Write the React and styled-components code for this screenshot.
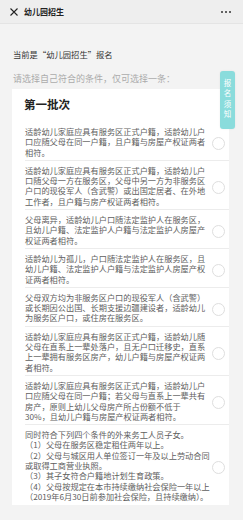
import React from 'react';
import styled, { createGlobalStyle } from 'styled-components';

const Global = createGlobalStyle`
  html, body {
    margin: 0;
    padding: 0;
    background: #f3f3f3;
  }
  body {
    font-family: "Noto Sans CJK SC", "Noto Sans", sans-serif;
  }
`

const Page = styled.div`
  position: relative;
  width: 243px;
  height: 520px;
  overflow: hidden;
  background: #f3f3f3;
`

const TopBar = styled.div`
  height: 24px;
  display: flex;
  align-items: center;
  padding: 0 10px;
  background: #eeeeee;
  border-bottom: 1px solid #e4e4e4;
  box-sizing: border-box;
`

const Title = styled.div`
  flex: 1;
  margin-left: 6px;
  font-size: 8px;
  font-weight: 700;
  color: #222;
  line-height: 10px;
`

const Dots = styled.div`
  display: flex;
  gap: 2px;
  margin-right: 2px;
`

const Dot = styled.span`
  width: 2px;
  height: 2px;
  border-radius: 50%;
  background: #333;
`

const Intro = styled.div`
  padding: 24px 14px 0 13px;
`

const Current = styled.div`
  font-size: 8.3px;
  line-height: 12px;
  color: #333;
`

const Hint = styled.div`
  margin-top: 13px;
  font-size: 9px;
  line-height: 12px;
  color: #ababab;
`

const Card = styled.div`
  margin: 4px 14px 0 12px;
  background: #fff;
  padding-bottom: 1px;
`

const Heading = styled.div`
  padding: 8px 0 0 12px;
  font-size: 11.5px;
  line-height: 15px;
  font-weight: 700;
  color: #222;
  margin-bottom: 10px;
`

const Item = styled.div`
  display: flex;
  align-items: center;
  margin-left: 13px;
  padding: 4px 4px 3px 0;
  border-bottom: ${p => (p.$last ? 'none' : '1px solid #ececec')};
`

const Text = styled.div`
  flex: 1;
  min-width: 0;
  font-size: 8.2px;
  line-height: 10.3px;
  color: #606060;
  white-space: ${p => (p.$lines ? 'pre' : 'pre-line')};
`

const Radio = styled.span`
  flex: none;
  width: 13px;
  height: 13px;
  margin: 4px 0 0 1px;
  border: 1px solid #dedede;
  border-radius: 50%;
  box-sizing: border-box;
`

const SideTab = styled.div`
  position: absolute;
  left: 220px;
  top: 71px;
  width: 15px;
  height: 58px;
  border-radius: 3px;
  background: #8adcdc;
  color: #fff;
  font-size: 7.5px;
  letter-spacing: 3px;
  writing-mode: vertical-rl;
  display: flex;
  align-items: center;
  justify-content: center;
  box-shadow: 0 0 2px rgba(0, 0, 0, 0.08);
`

const options = [
  '适龄幼儿家庭应具有服务区正式户籍，适龄幼儿户口应随父母在同一户籍，且户籍与房屋产权证两者相符。',
  '适龄幼儿家庭应具有服务区正式户籍，适龄幼儿户口随父母一方在服务区，父母中另一方为非服务区户口的现役军人（含武警）或出国定居者、在外地工作者，且户籍与房产权证两者相符。',
  '父母离异，适龄幼儿户口随法定监护人在服务区，且幼儿户籍、法定监护人户籍与法定监护人房屋产权证两者相符。',
  '适龄幼儿为孤儿，户口随法定监护人在服务区，且幼儿户籍、法定监护人户籍与法定监护人房屋产权证两者相符。',
  '父母双方均为非服务区户口的现役军人（含武警）或长期因公出国、长期支援边疆建设者，适龄幼儿为服务区户口，或住房在服务区。',
  '适龄幼儿家庭应具有服务区正式户籍，适龄幼儿随父母在直系上一辈处落户，且无户口迁移史，直系上一辈拥有服务区房产，幼儿户籍与房屋产权证两者相符。',
  '适龄幼儿家庭应具有服务区正式户籍，适龄幼儿户口应随父母在同一户籍；若父母与直系上一辈共有房产，原则上幼儿父母房产所占份额不低于\n30%，且幼儿户籍与房屋产权证两者相符。',
]

const lastLines = [
  '同时符合下列四个条件的外来务工人员子女。',
  '（1）父母在服务区稳定租住两年以上。',
  '（2）父母与城区用人单位签订一年及以上劳动合同',
  '或取得工商营业执照。',
  '（3）其子女符合户籍地计划生育政策。',
  '（4）父母按规定在本市持续缴纳社会保险一年以上',
  '（2019年6月30日前参加社会保险，且持续缴纳）。',
]

function CloseIcon() {
  return (
    <svg width="8" height="8" viewBox="0 0 8 8">
      <path d="M0.5 0.5 L7.5 7.5 M7.5 0.5 L0.5 7.5" stroke="#222" strokeWidth="1.1" />
    </svg>
  )
}

export default function App() {
  return (
    <Page>
      <Global />
      <TopBar>
        <CloseIcon />
        <Title>幼儿园招生</Title>
        <Dots><Dot /><Dot /><Dot /></Dots>
      </TopBar>

      <Intro>
        <Current>当前是“幼儿园招生”报名</Current>
        <Hint>请选择自己符合的条件，仅可选择一条：</Hint>
      </Intro>

      <Card>
        <Heading>第一批次</Heading>
        {options.map((t, i) => (
          <Item key={i}>
            <Text>{t}</Text>
            <Radio />
          </Item>
        ))}
        <Item $last>
          <Text $lines>{lastLines.join('\n')}</Text>
          <Radio />
        </Item>
      </Card>

      <SideTab>报名须知</SideTab>
    </Page>
  )
}
